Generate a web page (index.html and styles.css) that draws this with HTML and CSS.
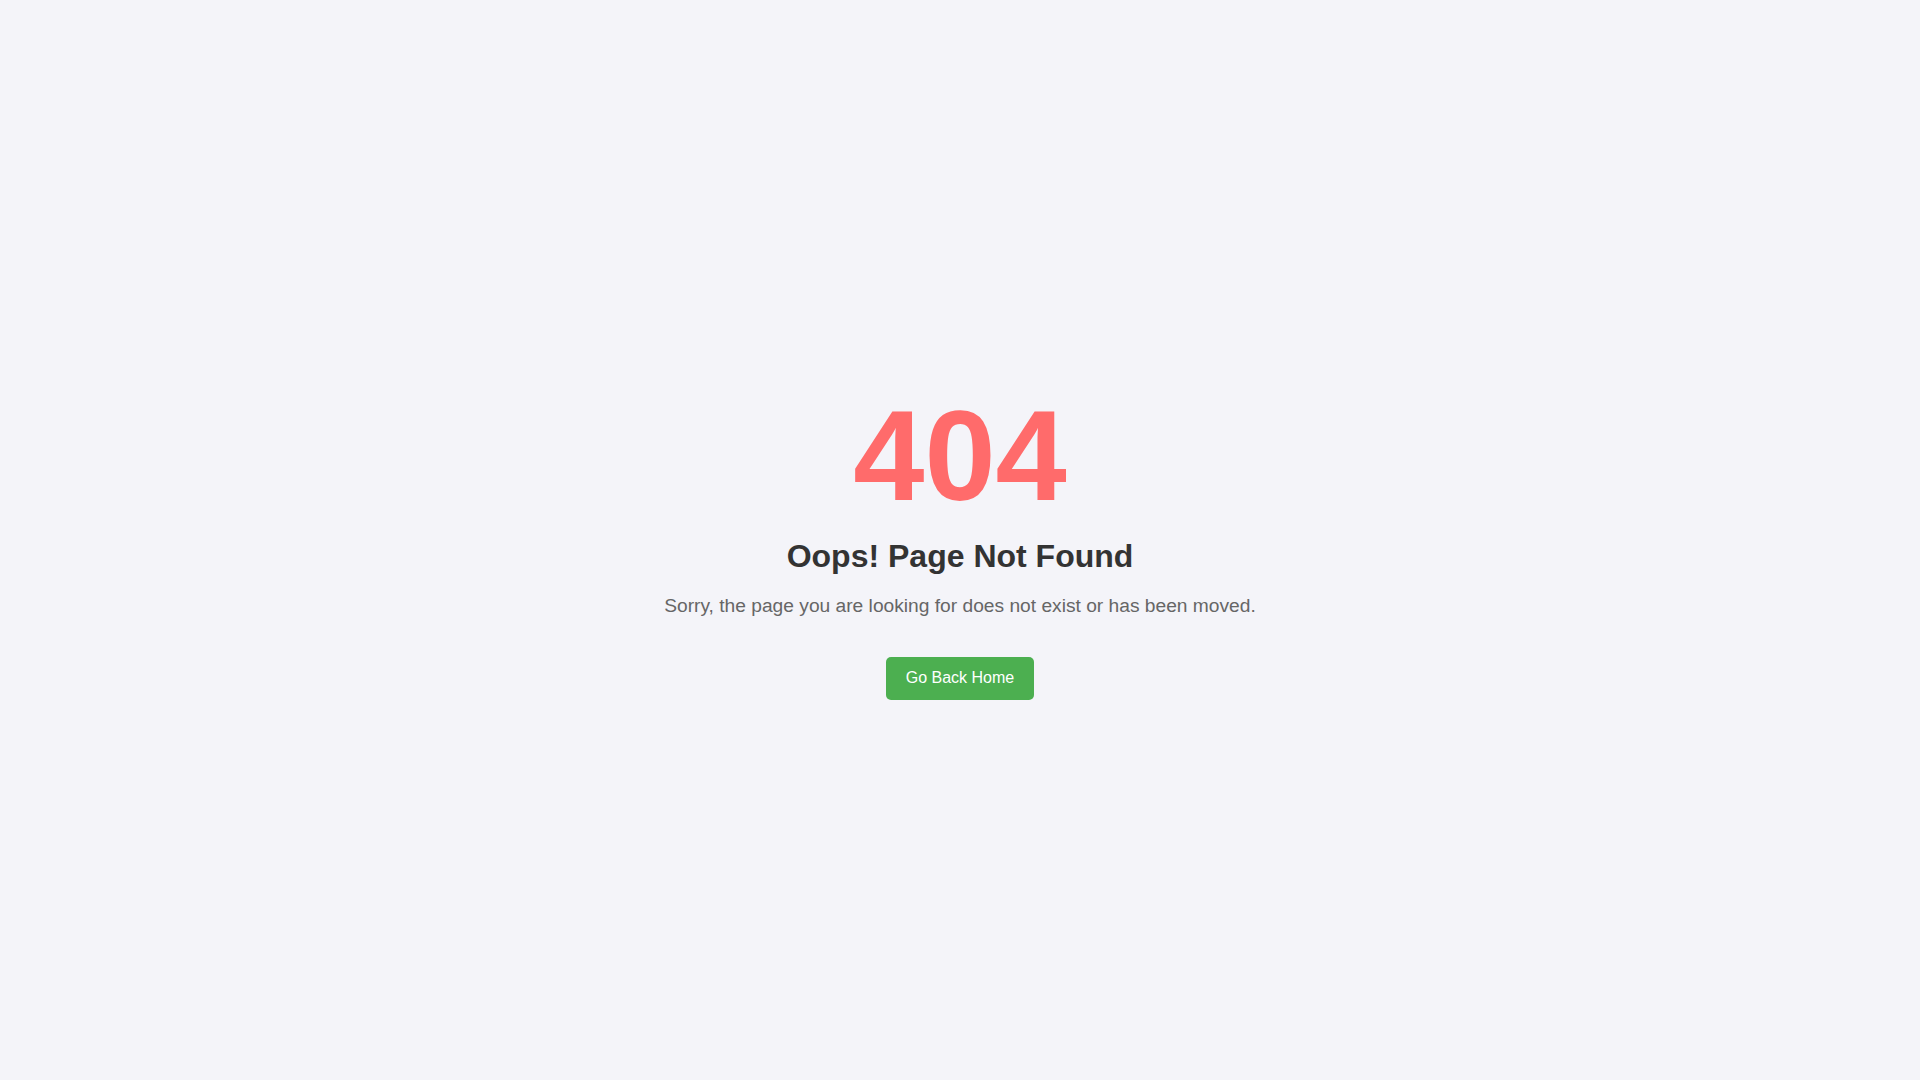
FILE: index.html
```html
<!DOCTYPE html>
<html lang="en">
<head>
<meta charset="utf-8">
<title>404 - Page Not Found</title>
<link rel="stylesheet" href="styles.css">
</head>
<body>
<main class="page">
  <div class="notfound">
    <h1 class="code">404</h1>
    <h2 class="title">Oops! Page Not Found</h2>
    <p class="message">Sorry, the page you are looking for does not exist or has been moved.</p>
    <a class="home-btn" href="#">Go Back Home</a>
  </div>
</main>
</body>
</html>
```

FILE: styles.css
```css
html, body {
  margin: 0;
  padding: 0;
}

body {
  background: #f4f4f9;
  font-family: "Liberation Sans", Arial, sans-serif;
}

.page {
  box-sizing: border-box;
  min-height: 100vh;
  padding-top: 2px;
  display: flex;
  align-items: center;
  justify-content: center;
}

.notfound {
  display: flex;
  flex-direction: column;
  align-items: center;
  text-align: center;
}

.code {
  margin: 0;
  font-size: 128px;
  font-weight: bold;
  line-height: 1.15;
  color: #ff6b6b;
}

.title {
  margin: 9px 0 0;
  font-size: 32px;
  font-weight: bold;
  line-height: 1.15;
  color: #333333;
}

.message {
  margin: 20px 0 0;
  font-size: 19.2px;
  line-height: 1.15;
  color: #666666;
}

.home-btn {
  margin-top: 40px;
  display: inline-block;
  padding: 12px 20px;
  font-size: 16px;
  line-height: 1.15;
  color: #ffffff;
  background: #4caf50;
  border-radius: 5px;
  text-decoration: none;
}
```
